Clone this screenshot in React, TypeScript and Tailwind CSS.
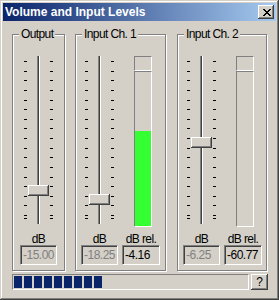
const RAISED =
  'bg-[#d4d0c8] shadow-[inset_-1px_-1px_0_#404040,inset_1px_1px_0_#ffffff,inset_-2px_-2px_0_#808080]'
const SUNKEN_THIN = 'border border-t-[#808080] border-l-[#808080] border-r-white border-b-white'

// pixel map of the caption "X" glyph, 8x7
const X_ROWS = [
  [0, 1, 6, 7],
  [1, 2, 5, 6],
  [2, 3, 4, 5],
  [3, 4],
  [2, 3, 4, 5],
  [1, 2, 5, 6],
  [0, 1, 6, 7],
]

function CloseGlyph() {
  return (
    <svg width="8" height="7" viewBox="0 0 8 7" shapeRendering="crispEdges">
      {X_ROWS.map((row, y) =>
        row.map((x) => <rect key={`${x}-${y}`} x={x} y={y} width="1" height="1" fill="#000" />),
      )}
    </svg>
  )
}

function Ticks() {
  return (
    <div className="flex h-full flex-col pt-[5px]">
      <div className="flex h-[155px] flex-col justify-between">
        {Array.from({ length: 17 }).map((_, i) => (
          <div key={i} className="h-px w-[3px] bg-black" />
        ))}
      </div>
      <div className="mt-[2px] h-px w-[3px] bg-black" />
    </div>
  )
}

function Slider({ thumbTop }: { thumbTop: string }) {
  return (
    <div className="relative flex h-[168px] w-[29px] justify-between">
      <Ticks />
      <div className="flex h-full w-[3px]">
        <div className="w-px bg-[#808080]" />
        <div className="w-px bg-[#404040]" />
        <div className="w-px bg-white" />
      </div>
      <Ticks />
      <div className={`absolute left-[4px] h-[11px] w-[21px] ${thumbTop} ${RAISED}`} />
    </div>
  )
}

function Meter({ level }: { level: string }) {
  return (
    <div className="ml-[12px] flex w-[18px] flex-col self-start">
      <div className={`h-[15px] ${SUNKEN_THIN}`} />
      <div className={`flex h-[156px] flex-col justify-end ${SUNKEN_THIN}`}>
        <div className={`w-full bg-[#33ff33] ${level}`} />
      </div>
    </div>
  )
}

function ValueBox({ value, disabled, width }: { value: string; disabled?: boolean; width: string }) {
  return (
    <div
      className={`flex h-[20px] items-center pl-[2px] text-[12px] leading-none tracking-[-0.5px] shadow-[inset_1px_1px_0_#404040] ${width} ${SUNKEN_THIN} ${
        disabled ? 'text-[#808080]' : 'text-black'
      }`}
    >
      {value}
    </div>
  )
}

function Column({
  control,
  label,
  value,
  disabled,
  width,
}: {
  control: React.ReactNode
  label: string
  value: string
  disabled?: boolean
  width: string
}) {
  return (
    <div className={`flex flex-col items-center ${width}`}>
      <div className="flex h-[171px] w-full flex-col items-center">{control}</div>
      <div className="mt-[6px] whitespace-nowrap text-[12px] leading-[12px] tracking-[-0.6px]">{label}</div>
      <ValueBox value={value} disabled={disabled} width={width} />
    </div>
  )
}

function Group({ title, className, children }: { title: string; className: string; children: React.ReactNode }) {
  return (
    <div
      className={`relative flex h-[237px] border border-[#808080] pt-[21px] shadow-[1px_1px_0_#ffffff,inset_1px_1px_0_#ffffff] ${className}`}
    >
      <div className="absolute left-[6px] top-[-7px] whitespace-nowrap bg-[#d4d0c8] px-[2px] text-[12px] leading-[13px] tracking-[-0.6px]">
        {title}
      </div>
      {children}
    </div>
  )
}

export default function App() {
  return (
    <div className="h-[300px] w-[279px] select-none bg-[#d4d0c8] p-[3px] font-['Liberation_Sans',Arial,sans-serif] text-black shadow-[inset_-1px_-1px_0_#404040,inset_1px_1px_0_#d4d0c8,inset_-2px_-2px_0_#808080,inset_2px_2px_0_#ffffff]">
      {/* Title bar */}
      <div className="flex h-[18px] items-center justify-between bg-[linear-gradient(to_right,#0a246a,#a6caf0)]">
        <span className="pl-[2px] text-[12px] font-bold text-white">Volume and Input Levels</span>
        <div className={`mr-[2px] flex h-[14px] w-[16px] items-center justify-center pl-[1px] ${RAISED}`}>
          <CloseGlyph />
        </div>
      </div>

      {/* Body */}
      <div className="flex flex-col pl-[9px]">
        <div className="mt-[13px] flex">
          <Group title="Output" className="w-[53px] pl-[7px]">
            <Column
              width="w-[37px]"
              control={<Slider thumbTop="top-[129px]" />}
              label="dB"
              value="-15.00"
              disabled
            />
          </Group>

          <Group title="Input Ch. 1" className="ml-[10px] w-[91px] gap-[4px] pl-[5px]">
            <Column
              width="w-[37px]"
              control={<Slider thumbTop="top-[138px]" />}
              label="dB"
              value="-18.25"
              disabled
            />
            <Column width="w-[38px]" control={<Meter level="h-[95px]" />} label="dB rel." value="-4.16" />
          </Group>

          <Group title="Input Ch. 2" className="ml-[11px] w-[90px] gap-[4px] pl-[5px]">
            <Column
              width="w-[37px]"
              control={<Slider thumbTop="top-[81px]" />}
              label="dB"
              value="-6.25"
              disabled
            />
            <Column width="w-[38px]" control={<Meter level="h-0" />} label="dB rel." value="-60.77" />
          </Group>
        </div>

        {/* Progress + help */}
        <div className="mt-[3px] flex">
          <div className={`flex h-[16px] w-[237px] gap-[2px] p-[1px] ${SUNKEN_THIN}`}>
            {Array.from({ length: 9 }).map((_, i) => (
              <div key={i} className="h-full w-[8px] bg-[#0a246a]" />
            ))}
          </div>
          <div className={`ml-[2px] flex h-[16px] w-[17px] items-center justify-center text-[12px] leading-none ${RAISED}`}>
            ?
          </div>
        </div>
      </div>
    </div>
  )
}
